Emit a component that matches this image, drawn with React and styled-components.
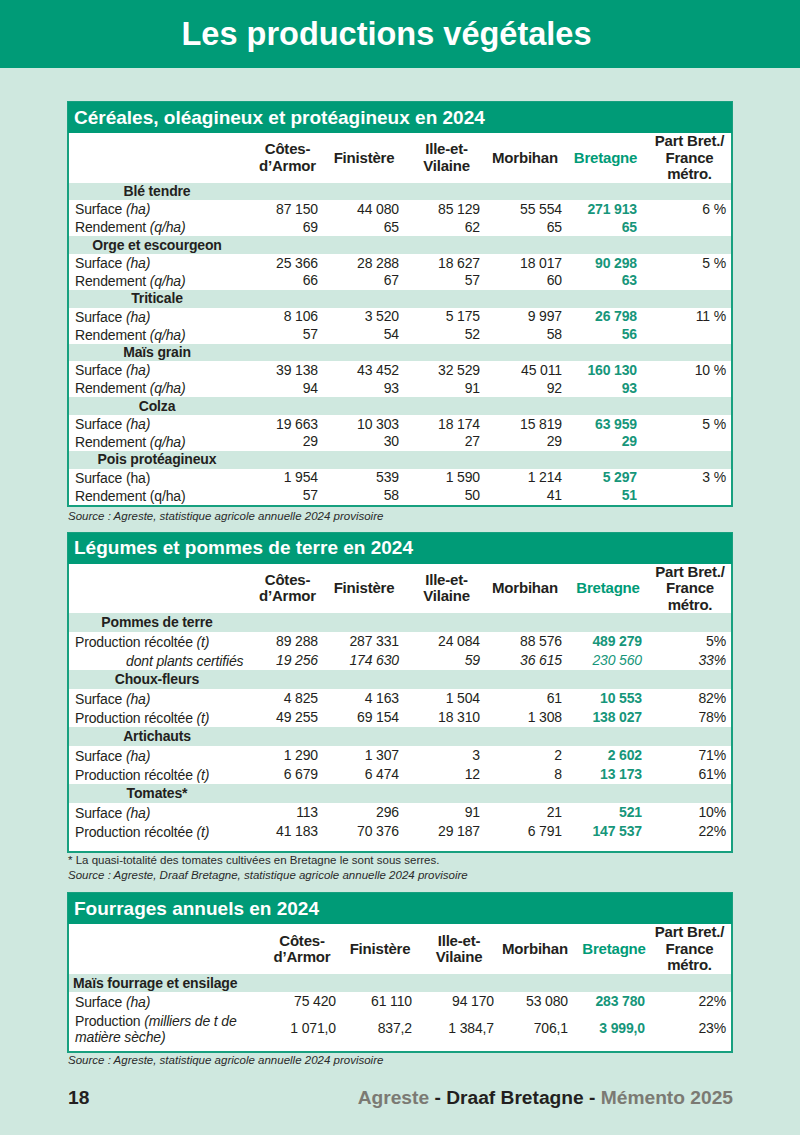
import React from "react";
import styled, { createGlobalStyle } from "styled-components";

const GREEN = "#009b77";
const MINT = "#cfe8df";
const TEXT = "#231f20";

const GlobalStyle = createGlobalStyle`
  html, body { margin: 0; padding: 0; }
  body {
    background: ${MINT};
    font-family: "Liberation Sans", Arial, sans-serif;
    color: ${TEXT};
  }
`;

const Page = styled.div`
  width: 800px;
  height: 1135px;
  background: ${MINT};
  display: flex;
  flex-direction: column;
  overflow: hidden;
`;

const Banner = styled.header`
  height: 68px;
  flex: none;
  background: ${GREEN};
  display: flex;
  align-items: center;
  justify-content: center;
  padding-right: 27px;
`;

const PageTitle = styled.h1`
  margin: 0;
  color: #fff;
  font-size: 32.5px;
  font-weight: 700;
`;

const Main = styled.main`
  padding: 33px 67px 0 67px;
  display: flex;
  flex-direction: column;
`;

const Section = styled.section`
  margin-bottom: ${(p) => p.$mb || 0}px;
`;

const Box = styled.div`
  border: 2px solid #17a07f;
  background: #fff;
  padding-bottom: ${(p) => p.$pb || 0}px;
`;

const TitleBar = styled.h2`
  height: 31px;
  background: ${GREEN};
  color: #fff;
  font-size: 19px;
  font-weight: 700;
  display: flex;
  align-items: center;
  padding-left: 6px;
  margin: -1px -1px 0 -1px;
`;

const Table = styled.table`
  width: 100%;
  border-collapse: collapse;
  border-spacing: 0;
  table-layout: fixed;
  font-size: 14px;
  letter-spacing: -0.15px;
`;

const HeadCell = styled.th`
  height: ${(p) => p.$h}px;
  padding: 0 0 0 ${(p) => p.$pl || 0}px;
  font-size: 15px;
  line-height: 16.5px;
  letter-spacing: -0.2px;
  font-weight: 700;
  text-align: center;
  vertical-align: middle;
  color: ${(p) => (p.$green ? GREEN : TEXT)};
`;

const CatRow = styled.tr`
  background: ${MINT};
  height: ${(p) => p.$h}px;
`;

const CatCell = styled.td`
  padding: 0 0 0 ${(p) => (p.$left ? 4 : 0)}px;
  font-size: 14px;
  line-height: 15px;
  font-weight: 700;
  text-align: ${(p) => (p.$left ? "left" : "center")};
  vertical-align: middle;
`;

const Row = styled.tr`
  height: ${(p) => p.$h}px;
`;

const LabelCell = styled.td`
  padding: 0 0 0 ${(p) => p.$indent || 6}px;
  line-height: 16px;
  vertical-align: middle;
  font-style: ${(p) => (p.$italic ? "italic" : "normal")};
  white-space: nowrap;
`;

const Unit = styled.i`
  font-style: italic;
`;

const NumCell = styled.td`
  padding: 0 ${(p) => p.$pr}px 0 0;
  text-align: right;
  white-space: nowrap;
  vertical-align: middle;
  line-height: 15px;
  font-style: ${(p) => (p.$italic ? "italic" : "normal")};
  font-weight: ${(p) => (p.$bold ? 700 : 400)};
  color: ${(p) => (p.$green ? "#16967a" : TEXT)};
`;

const Note = styled.p`
  margin: ${(p) => p.$mt || 0}px 0 0 1px;
  font-size: 11.5px;
  line-height: 15px;
  font-style: ${(p) => (p.$italic ? "italic" : "normal")};
  color: #2a2a2a;
`;

const Footer = styled.footer`
  margin-top: auto;
  flex: none;
  padding: 0 67px 12px 68px;
  height: 60px;
  display: flex;
  align-items: center;
  justify-content: space-between;
  font-size: 19.2px;
  font-weight: 700;
`;

const PageNum = styled.span`
  color: ${TEXT};
`;

const Credit = styled.span`
  color: ${(p) => (p.$dark ? TEXT : "#7b7a73")};
`;

const HEADERS = [
  { label: ["Côtes-", "d’Armor"] },
  { label: ["Finistère"] },
  { label: ["Ille-et-", "Vilaine"] },
  { label: ["Morbihan"] },
  { label: ["Bretagne"], green: true },
  { label: ["Part Bret./", "France", "métro."] },
];

const Lines = ({ lines }) =>
  lines.map((l, j) => (
    <React.Fragment key={j}>
      {j > 0 && <br />}
      {l}
    </React.Fragment>
  ));

function DataTable({ cols, pads, headPl, headH, rowH, catH, groups, catLeft }) {
  return (
    <Table>
      <colgroup>
        {cols.map((w, i) => (
          <col key={i} style={{ width: w }} />
        ))}
      </colgroup>
      <thead>
        <tr>
          <HeadCell $h={headH} />
          {HEADERS.map((h, i) => (
            <HeadCell key={i} $h={headH} $pl={headPl[i]} $green={h.green}>
              <Lines lines={h.label} />
            </HeadCell>
          ))}
        </tr>
      </thead>
      <tbody>
        {groups.map((g, gi) => (
          <React.Fragment key={gi}>
            <CatRow $h={catH}>
              <CatCell $left={catLeft}>{g.title}</CatCell>
              <td colSpan={6} />
            </CatRow>
            {g.rows.map((r, ri) => (
              <Row key={ri} $h={r.h || rowH}>
                <LabelCell $indent={r.indent} $italic={r.italic}>
                  {r.label}
                  {r.unit && (
                    <>
                      {" "}
                      {r.plainUnit ? r.unit : <Unit>{r.unit}</Unit>}
                    </>
                  )}
                  {r.unitLines && (
                    <>
                      {" "}
                      <Unit>
                        <Lines lines={r.unitLines} />
                      </Unit>
                    </>
                  )}
                </LabelCell>
                {r.values.map((v, vi) => (
                  <NumCell
                    key={vi}
                    $pr={pads[vi]}
                    $italic={r.italic}
                    $green={vi === 4}
                    $bold={vi === 4 && !r.italic}
                  >
                    {v}
                  </NumCell>
                ))}
              </Row>
            ))}
          </React.Fragment>
        ))}
      </tbody>
    </Table>
  );
}

const S = (...v) => v;

const cereals = [
  {
    title: "Blé tendre",
    rows: [
      { label: "Surface", unit: "(ha)", values: S("87 150", "44 080", "85 129", "55 554", "271 913", "6 %") },
      { label: "Rendement", unit: "(q/ha)", values: S("69", "65", "62", "65", "65", "") },
    ],
  },
  {
    title: "Orge et escourgeon",
    rows: [
      { label: "Surface", unit: "(ha)", values: S("25 366", "28 288", "18 627", "18 017", "90 298", "5 %") },
      { label: "Rendement", unit: "(q/ha)", values: S("66", "67", "57", "60", "63", "") },
    ],
  },
  {
    title: "Triticale",
    rows: [
      { label: "Surface", unit: "(ha)", values: S("8 106", "3 520", "5 175", "9 997", "26 798", "11 %") },
      { label: "Rendement", unit: "(q/ha)", values: S("57", "54", "52", "58", "56", "") },
    ],
  },
  {
    title: "Maïs grain",
    rows: [
      { label: "Surface", unit: "(ha)", values: S("39 138", "43 452", "32 529", "45 011", "160 130", "10 %") },
      { label: "Rendement", unit: "(q/ha)", values: S("94", "93", "91", "92", "93", "") },
    ],
  },
  {
    title: "Colza",
    rows: [
      { label: "Surface", unit: "(ha)", values: S("19 663", "10 303", "18 174", "15 819", "63 959", "5 %") },
      { label: "Rendement", unit: "(q/ha)", values: S("29", "30", "27", "29", "29", "") },
    ],
  },
  {
    title: "Pois protéagineux",
    rows: [
      { label: "Surface", unit: "(ha)", plainUnit: true, values: S("1 954", "539", "1 590", "1 214", "5 297", "3 %") },
      { label: "Rendement", unit: "(q/ha)", plainUnit: true, values: S("57", "58", "50", "41", "51", "") },
    ],
  },
];

const legumes = [
  {
    title: "Pommes de terre",
    rows: [
      { label: "Production récoltée", unit: "(t)", values: S("89 288", "287 331", "24 084", "88 576", "489 279", "5%") },
      { label: "dont plants certifiés", italic: true, indent: 57, values: S("19 256", "174 630", "59", "36 615", "230 560", "33%") },
    ],
  },
  {
    title: "Choux-fleurs",
    rows: [
      { label: "Surface", unit: "(ha)", values: S("4 825", "4 163", "1 504", "61", "10 553", "82%") },
      { label: "Production récoltée", unit: "(t)", values: S("49 255", "69 154", "18 310", "1 308", "138 027", "78%") },
    ],
  },
  {
    title: "Artichauts",
    rows: [
      { label: "Surface", unit: "(ha)", values: S("1 290", "1 307", "3", "2", "2 602", "71%") },
      { label: "Production récoltée", unit: "(t)", values: S("6 679", "6 474", "12", "8", "13 173", "61%") },
    ],
  },
  {
    title: "Tomates*",
    rows: [
      { label: "Surface", unit: "(ha)", values: S("113", "296", "91", "21", "521", "10%") },
      { label: "Production récoltée", unit: "(t)", values: S("41 183", "70 376", "29 187", "6 791", "147 537", "22%") },
    ],
  },
];

const fourrages = [
  {
    title: "Maïs fourrage et ensilage",
    rows: [
      { label: "Surface", unit: "(ha)", h: 19, values: S("75 420", "61 110", "94 170", "53 080", "283 780", "22%") },
      {
        label: "Production",
        unitLines: ["(milliers de t de", "matière sèche)"],
        h: 35,
        values: S("1 071,0", "837,2", "1 384,7", "706,1", "3 999,0", "23%"),
      },
    ],
  },
];

export default function App() {
  return (
    <>
      <GlobalStyle />
      <Page>
        <Banner>
          <PageTitle>Les productions végétales</PageTitle>
        </Banner>
        <Main>
          <Section $mb={8}>
            <Box>
              <TitleBar>Céréales, oléagineux et protéagineux en 2024</TitleBar>
              <DataTable
                cols={[176, 75, 80, 81, 82, 77, 91]}
                pads={[2, 1, 1, 1, 3, 5]}
                headPl={[10, 8, 12, 6, 8, 8]}
                headH={48}
                rowH={17.9}
                catH={17.9}
                groups={cereals}
              />
            </Box>
            <Note $italic $mt={2}>Source : Agreste, statistique agricole annuelle 2024 provisoire</Note>
          </Section>

          <Section $mb={9}>
            <Box $pb={10}>
              <TitleBar>Légumes et pommes de terre en 2024</TitleBar>
              <DataTable
                cols={[176, 75, 80, 81, 82, 82, 86]}
                pads={[2, 1, 1, 1, 3, 5]}
                headPl={[10, 8, 12, 6, 8, 4]}
                headH={47}
                rowH={19}
                catH={19}
                groups={legumes}
              />
            </Box>
            <Note>* La quasi-totalité des tomates cultivées en Bretagne le sont sous serres.</Note>
            <Note $italic>Source : Agreste, Draaf Bretagne, statistique agricole annuelle 2024 provisoire</Note>
          </Section>

          <Section>
            <Box $pb={5}>
              <TitleBar>Fourrages annuels en 2024</TitleBar>
              <DataTable
                cols={[187, 82, 76, 82, 74, 78, 83]}
                pads={[2, 2, 2, 2, 3, 5]}
                headPl={[10, 8, 8, 4, 10, 0]}
                headH={50}
                rowH={19}
                catH={18}
                catLeft
                groups={fourrages}
              />
            </Box>
            <Note $italic $mt={0}>Source : Agreste, statistique agricole annuelle 2024 provisoire</Note>
          </Section>
        </Main>
        <Footer>
          <PageNum>18</PageNum>
          <span>
            <Credit>Agreste</Credit>
            <Credit $dark> - Draaf Bretagne - </Credit>
            <Credit>Mémento 2025</Credit>
          </span>
        </Footer>
      </Page>
    </>
  );
}
